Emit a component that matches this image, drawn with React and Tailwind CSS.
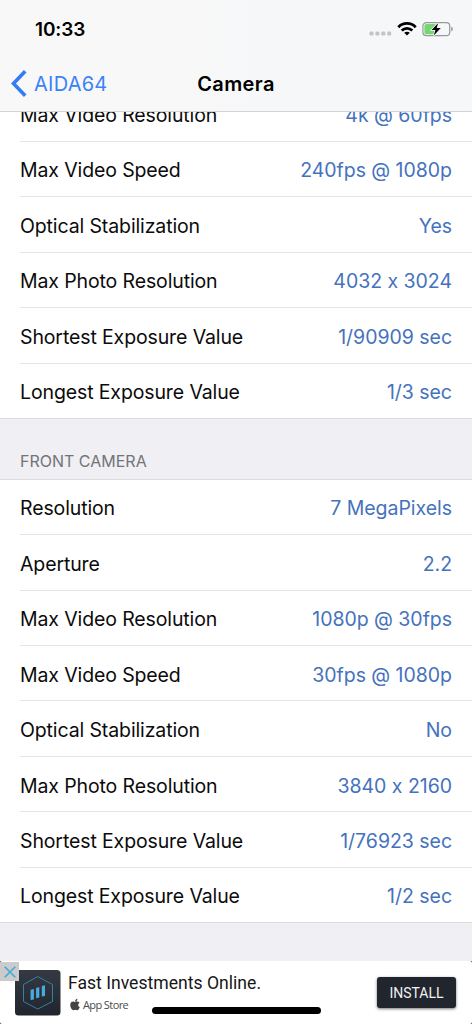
const rear = [
  ['Max Video Resolution', '4k @ 60fps'],
  ['Max Video Speed', '240fps @ 1080p'],
  ['Optical Stabilization', 'Yes'],
  ['Max Photo Resolution', '4032 x 3024'],
  ['Shortest Exposure Value', '1/90909 sec'],
  ['Longest Exposure Value', '1/3 sec'],
];

const front = [
  ['Resolution', '7 MegaPixels'],
  ['Aperture', '2.2'],
  ['Max Video Resolution', '1080p @ 30fps'],
  ['Max Video Speed', '30fps @ 1080p'],
  ['Optical Stabilization', 'No'],
  ['Max Photo Resolution', '3840 x 2160'],
  ['Shortest Exposure Value', '1/76923 sec'],
  ['Longest Exposure Value', '1/2 sec'],
];

function Row({ label, value }) {
  return (
    <div className="ml-5 flex h-[55.44px] items-center justify-between border-b border-[#e5e5e7] pr-5 pt-[3px] text-[19.5px] leading-6 last:ml-0 last:border-[#dcdce0] last:pl-5">
      <span className="tracking-[-0.12px] text-[#0b0b0b]">{label}</span>
      <span className="tracking-[-0.03px] text-[#4572bd]">{value}</span>
    </div>
  );
}

function StatusBar() {
  return (
    <div className="flex h-[56px] items-center justify-between pl-[35px] pr-[18px] pt-[2px]">
      <span className="mt-[2px] text-[19px] font-semibold leading-6 tracking-[-0.1px] text-black">10:33</span>
      <div className="flex items-center">
        <svg className="mt-[9px] h-[5px] w-[23px]" viewBox="0 0 23 5" fill="#c4c4c6">
          <rect x="0.5" y="0.5" width="4" height="4" rx="1.3" />
          <rect x="6.4" y="0.5" width="4" height="4" rx="1.3" />
          <rect x="12.3" y="0.5" width="4" height="4" rx="1.3" />
          <rect x="18.2" y="0.5" width="4" height="4" rx="1.3" />
        </svg>
        <svg className="ml-[5px] h-[14px] w-[20px]" viewBox="0 0 20 14" fill="none" stroke="#000" strokeWidth="2.8">
          <path d="M1.3 5.2C6.2.2 13.8.2 18.7 5.2" />
          <path d="M4.7 8.6c3-2.9 7.6-2.9 10.6 0" />
          <path d="M10 13.5 7.2 10.7c1.6-1.4 4-1.4 5.6 0z" fill="#000" stroke="none" />
        </svg>
        <svg className="ml-[5px] h-[16px] w-[32px]" viewBox="0 0 32 16">
          <rect x="0.9" y="1.6" width="26.8" height="13" rx="3.4" fill="none" stroke="#99999b" strokeWidth="1.2" />
          <path d="M29.2 5.8c2.2.7 2.2 3.9 0 4.6z" fill="#99999b" />
          <path d="M4.2 3h9.3v10.2H4.2A1.8 1.8 0 0 1 2.4 11.4V4.8A1.8 1.8 0 0 1 4.2 3z" fill="#73d870" />
          <path d="M16.200 2 9.600 9h3.800l-1.600 5.500 7-7.500h-4.100z" fill="#000" stroke="#f7f8fa" strokeWidth="1.600" paintOrder="stroke" />
        </svg>
      </div>
    </div>
  );
}

function AppleLogo() {
  return (
    <svg className="-mt-px h-[13px] w-[10px]" viewBox="0 0 384 512" fill="#444">
      <path d="M318.7 268.7c-.2-36.700 16.400-64.400 50-84.800-18.800-26.900-47.200-41.700-84.700-44.600-35.500-2.800-74.300 20.700-88.500 20.700-15 0-49.400-19.700-76.400-19.700C63.300 141.200 4 184.800 4 273.500q0 39.300 14.400 81.200c12.800 36.700 59 126.700 107.200 125.200 25.200-.6 43-17.900 75.800-17.900 31.800 0 48.300 17.900 76.400 17.900 48.600-.7 90.400-82.500 102.600-119.300-65.200-30.700-61.700-90-61.700-91.900zm-56.600-164.200c27.300-32.400 24.800-61.900 24-72.500-24.100 1.400-52 16.400-67.900 34.900-17.500 19.800-27.800 44.300-25.600 71.900 26.100 2 49.900-11.400 69.500-34.300z" />
    </svg>
  );
}

export default function App() {
  return (
    <div className="flex h-[1024px] w-[472px] flex-col overflow-hidden bg-[#efeff4] font-[Inter,sans-serif]">
      <header className="h-[112px] shrink-0 border-b border-[#d4d4d6] bg-linear-to-r from-[#f8f8f8] to-[#f6f7f9]">
        <StatusBar />
        <nav className="grid h-[55px] grid-cols-3 items-center px-[11px]">
          <div className="flex items-center text-[20px] leading-6 text-[#3b82f6]">
            <svg className="h-[27px] w-[16px]" viewBox="0 0 16 27" fill="none" stroke="#347cf6" strokeWidth="3.6">
              <path d="M14.2 1.3 2.5 13.500 14.200 25.700" />
            </svg>
            <span className="ml-[7px] tracking-[0.25px]">AIDA64</span>
          </div>
          <h1 className="text-center text-[20px] font-semibold leading-6 tracking-[0.4px] text-black">Camera</h1>
        </nav>
      </header>

      <main className="h-[849px] shrink-0 overflow-hidden">
        <section className="-mt-[25.7px] bg-white">
          {rear.map(([label, value]) => (
            <Row key={label} label={label} value={value} />
          ))}
        </section>
        <h2 className="flex h-[60.7px] items-end border-b border-[#dcdce0] pb-[8px] pl-5 text-[16px] leading-5 text-[#747478]">
          FRONT CAMERA
        </h2>
        <section className="bg-white">
          {front.map(([label, value]) => (
            <Row key={label} label={label} value={value} />
          ))}
        </section>
      </main>

      <footer className="h-[63px] shrink-0 bg-[#333]">
        <div className="relative flex h-full items-start rounded-[2px] bg-white pl-[15px] pr-4 font-[Roboto,sans-serif]">
          <svg className="mt-[9px] h-[46px] w-[46px] shrink-0" viewBox="0 0 46 46">
            <defs>
              <linearGradient id="tile" x1="0" y1="0" x2="0" y2="1">
                <stop offset="0" stopColor="#343942" />
                <stop offset="1" stopColor="#20252e" />
              </linearGradient>
            </defs>
            <rect width="45.500" height="45.500" rx="3.500" fill="url(#tile)" />
            <path d="M22.700 6.500 37.500 14.500V31.500L22.700 39 8.500 31.500V14.500z" fill="none" stroke="#367fa8" strokeWidth="1" />
            <path d="M15.600 19.700 18.900 19.100V29.400l-3.300.6zM21.100 17.800l3.200-.6v10.400l-3.200.6zM26.800 15.900l3.200-.6v10.700l-3.200.6z" fill="#4aa9df" />
          </svg>
          <div className="ml-[7px] mt-[10px]">
            <p className="text-[17.6px] leading-6 text-[#161616]">Fast Investments Online.</p>
            <div className="mt-[3px] flex items-center pl-[2px] font-['Open_Sans',sans-serif] text-[11px] leading-[13px] text-[#4b4b4b]">
              <AppleLogo />
              <span className="ml-[3px] tracking-[-0.6px]">App Store</span>
            </div>
          </div>
          <button className="ml-auto mt-[16px] h-[31px] w-[79px] rounded-[3px] bg-[#21252d] text-[14px] leading-5 text-[#f2f2f2] shadow-[0_1px_3px_rgba(0,0,0,0.55)]">
            INSTALL
          </button>
          <div className="absolute left-0 top-px flex h-[19px] w-[19px] items-center justify-center bg-[#cbcbcb]">
            <svg className="h-[12px] w-[12px]" viewBox="0 0 12 12" fill="none" stroke="#45a9d5" strokeWidth="1.6">
              <path d="M.7.7l10.600 10.600M11.300.7.7 11.300" />
            </svg>
          </div>
          <div className="absolute left-[152px] top-[46px] h-[7px] w-[168.500px] rounded-full bg-black" />
        </div>
      </footer>
    </div>
  );
}
